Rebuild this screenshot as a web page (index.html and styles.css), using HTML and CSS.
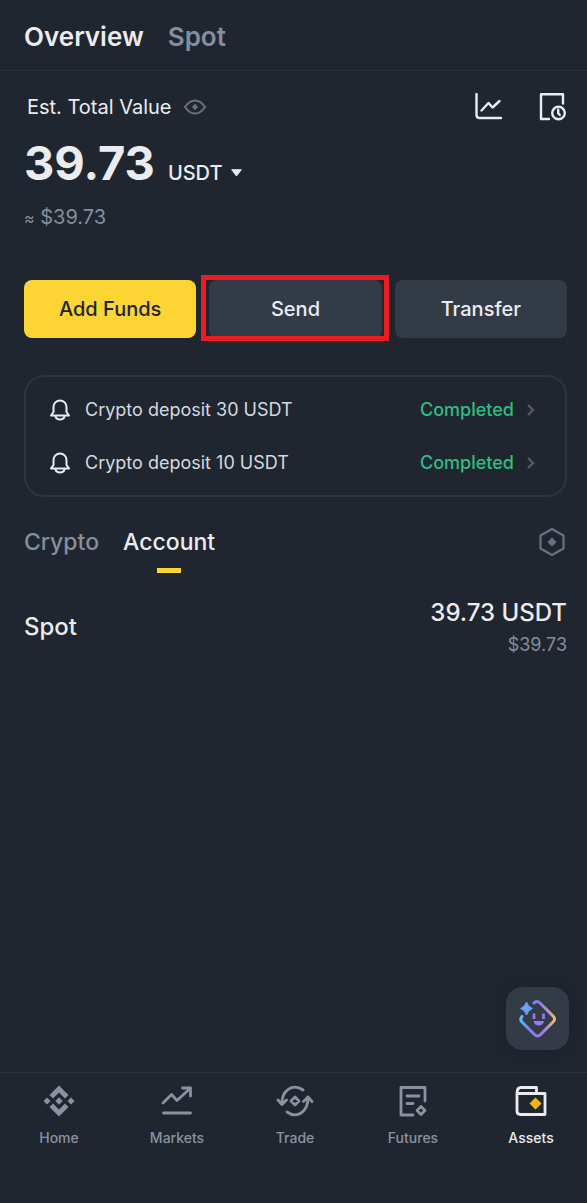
FILE: index.html
```html
<!DOCTYPE html>
<html lang="en">
<head>
<meta charset="utf-8">
<meta name="viewport" content="width=device-width, initial-scale=1">
<title>Assets</title>
<link rel="stylesheet" href="styles.css">
</head>
<body>
<div class="app">
  <header class="top-tabs">
    <button class="top-tab is-active" type="button">Overview</button>
    <button class="top-tab" type="button">Spot</button>
  </header>

  <main class="content">
    <section class="balance">
      <div class="balance-head">
        <h1 class="balance-label">Est. Total Value</h1>
        <button class="icon-button eye" type="button" aria-label="Hide balance">
          <svg width="22" height="16" viewBox="0 0 22 16" fill="none" stroke="currentColor" stroke-width="2" stroke-linejoin="round"><path d="M1 8C4 3.500 7.500 1.500 11 1.500S18 3.500 21 8C18 12.500 14.500 14.500 11 14.500S4 12.500 1 8Z"/><path d="M11 4.800 14.200 8 11 11.200 7.800 8Z" fill="currentColor" stroke="none"/></svg>
        </button>
        <div class="balance-tools">
          <button class="icon-button" type="button" aria-label="Profit and loss">
            <svg width="28" height="28" viewBox="0 0 28 28" fill="none" stroke="currentColor" stroke-width="2.400" stroke-linecap="round" stroke-linejoin="round"><path d="M1.500 1V22Q1.500 25 4.500 25H26"/><path d="M6.500 17.500 13.500 10 17.500 14.500 24.500 8"/></svg>
          </button>
          <button class="icon-button" type="button" aria-label="History">
            <svg width="28" height="28" viewBox="0 0 28 28" fill="none" stroke="currentColor" stroke-width="2.400" stroke-linecap="round" stroke-linejoin="round"><path d="M24 10.500V1.200H2V26H10"/><circle cx="19.500" cy="20" r="6.300"/><path d="M19.200 16.800V20.300L20.800 22"/></svg>
          </button>
        </div>
      </div>
      <div class="balance-main">
        <span class="balance-value">39.73</span>
        <button class="currency" type="button">USDT
          <svg width="11" height="8" viewBox="0 0 11 8" fill="currentColor" stroke="currentColor" stroke-width="1" stroke-linejoin="round"><path d="M.7.700H10.300L5.500 7Z"/></svg>
        </button>
      </div>
      <p class="balance-fiat"><span class="approx">≈</span> $39.73</p>
    </section>

    <div class="actions">
      <button class="action action-primary" type="button">Add Funds</button>
      <button class="action is-highlighted" type="button">Send</button>
      <button class="action" type="button">Transfer</button>
    </div>

    <div class="notices">
      <a class="notice" href="#">
        <svg class="bell" width="20" height="22" viewBox="0 0 20 22" fill="none" stroke="currentColor" stroke-width="2" stroke-linecap="round" stroke-linejoin="round"><path d="M3.500 13V8A6.500 6.500 0 0 1 16.500 8V13L19 16.500H1Z"/><path d="M5.500 17.500C6.500 21.500 13.500 21.500 14.500 17.500"/></svg>
        <span class="notice-text">Crypto deposit 30 USDT</span>
        <span class="notice-status">Completed</span>
        <svg class="chevron" width="8" height="12" viewBox="0 0 8 12" fill="none" stroke="currentColor" stroke-width="2.400"><path d="M1 1 6 6 1 11"/></svg>
      </a>
      <a class="notice" href="#">
        <svg class="bell" width="20" height="22" viewBox="0 0 20 22" fill="none" stroke="currentColor" stroke-width="2" stroke-linecap="round" stroke-linejoin="round"><path d="M3.500 13V8A6.500 6.500 0 0 1 16.500 8V13L19 16.500H1Z"/><path d="M5.500 17.500C6.500 21.500 13.500 21.500 14.500 17.500"/></svg>
        <span class="notice-text">Crypto deposit 10 USDT</span>
        <span class="notice-status">Completed</span>
        <svg class="chevron" width="8" height="12" viewBox="0 0 8 12" fill="none" stroke="currentColor" stroke-width="2.400"><path d="M1 1 6 6 1 11"/></svg>
      </a>
    </div>

    <div class="list-tabs">
      <button class="list-tab" type="button">Crypto</button>
      <button class="list-tab is-active" type="button">Account</button>
      <button class="icon-button list-settings" type="button" aria-label="Settings">
        <svg width="28" height="30" viewBox="0 0 28 30" fill="none" stroke="currentColor" stroke-width="2.200" stroke-linejoin="round"><path d="M13 2 24.500 8.500V21.500L13 28 1.500 21.500V8.500Z"/><path d="M13 10.500 17.500 15 13 19.500 8.500 15Z" fill="currentColor" stroke="none"/></svg>
      </button>
    </div>

    <section class="account">
      <h2 class="account-name">Spot</h2>
      <div class="account-amounts">
        <span class="account-amount">39.73 USDT</span>
        <span class="account-fiat">$39.73</span>
      </div>
    </section>

    <button class="assistant" type="button" aria-label="Assistant">
      <svg width="40" height="40" viewBox="0 0 40 40" fill="none">
        <defs><linearGradient id="glow" x1="2" y1="20" x2="38" y2="20" gradientUnits="userSpaceOnUse"><stop offset="0" stop-color="#62b8f5"/><stop offset=".25" stop-color="#7286f4"/><stop offset=".6" stop-color="#9b78ee"/><stop offset=".82" stop-color="#c795c5"/><stop offset="1" stop-color="#f3c65c"/></linearGradient></defs>
        <path d="M16 4Q19 1 22 4L35 17Q38 20 35 23L22.500 35.500Q19.500 38.500 16.500 35.500L4 23Q1.500 20.500 4 17.500" stroke="url(#glow)" stroke-width="3" stroke-linecap="round"/>
        <path d="M8.500 3Q9.700 7.800 14.500 9.500Q9.700 11.200 8.500 16Q7.300 11.200 2.500 9.500Q7.300 7.800 8.500 3Z" fill="#6da0fa" stroke="#6da0fa" stroke-linejoin="round"/>
        <path d="M16 14.500V20M25.500 14.500V20" stroke="#8f79ec" stroke-width="2.800"/>
        <path d="M15.500 22H26C25 28 16.500 28 15.500 22Z" fill="#9a7af0"/>
      </svg>
    </button>
  </main>

  <nav class="bottom-nav" aria-label="Main">
    <a class="nav-item" href="#">
      <svg width="32" height="32" viewBox="0 0 32 32" fill="currentColor"><path d="M16 .500 25.500 10 22 13.500 16 7.500 10 13.500 6.500 10ZM16 31.500 25.500 22 22 18.500 16 24.500 10 18.500 6.500 22ZM4 12.500 7.500 16 4 19.500 .500 16ZM28 12.500 31.500 16 28 19.500 24.500 16ZM16 12.300 19.700 16 16 19.700 12.300 16Z"/></svg>
      <span>Home</span>
    </a>
    <a class="nav-item" href="#">
      <svg width="32" height="32" viewBox="0 0 32 32" fill="none" stroke="currentColor" stroke-width="2.800" stroke-linecap="round" stroke-linejoin="round"><path d="M2 18 10.500 9.500 16 15.500 28.500 4"/><path d="M21.500 3H29.500V11"/><path d="M2.500 28H29.500"/></svg>
      <span>Markets</span>
    </a>
    <a class="nav-item" href="#">
      <svg width="38" height="32" viewBox="0 0 38 32" fill="none" stroke="currentColor" stroke-width="2.800" stroke-linecap="round" stroke-linejoin="round"><path d="M27 5C17-2 5.500 5 6 19M2 15 6 19.500 10.500 15"/><path d="M11 27C21 34 32.500 27 32 12M27.500 16.500 32 12 36 16.500"/><path d="M19 12 23 16 19 20 15 16Z"/></svg>
      <span>Trade</span>
    </a>
    <a class="nav-item" href="#">
      <svg width="30" height="32" viewBox="0 0 30 32" fill="none" stroke="currentColor" stroke-width="2.800" stroke-linecap="round" stroke-linejoin="round"><path d="M27 16V2.500H3V30H15"/><path d="M9 11H21M9 18.500H15"/><path d="M23 21.500 27 25.500 23 29.500 19 25.500Z"/></svg>
      <span>Futures</span>
    </a>
    <a class="nav-item is-active" href="#" aria-current="page">
      <svg width="32" height="32" viewBox="0 0 32 32" fill="none" stroke="currentColor" stroke-width="2.800" stroke-linejoin="round"><path d="M2 8.500V26Q2 29.500 5.500 29.500H30V8.500H2Q2 2.500 6 2.500H21.500V8.500"/><path d="M20.500 12.500 26.500 18.500 20.500 24.500 14.500 18.500Z" fill="#f0b90b" stroke="none"/></svg>
      <span>Assets</span>
    </a>
  </nav>
</div>
</body>
</html>
```
FILE: styles.css
```css
:root {
  --bg: #202630;
  --surface: #333b47;
  --line: #2b323d;
  --text: #eaecef;
  --muted: #848e9c;
  --yellow: #fcd535;
  --green: #2ebd85;
}

* {
  box-sizing: border-box;
}

body {
  margin: 0;
  background: var(--bg);
  color: var(--text);
  font-family: Inter, "Liberation Sans", sans-serif;
}

button {
  padding: 0;
  border: 0;
  background: none;
  color: inherit;
  font: inherit;
}

a {
  color: inherit;
  text-decoration: none;
}

h1,
h2,
p {
  margin: 0;
}

svg {
  display: block;
  flex: none;
}

.app {
  display: flex;
  flex-direction: column;
  min-height: 100vh;
}

.top-tabs {
  display: flex;
  gap: 24px;
  padding: 21px 24px 17px;
  border-bottom: 1px solid #272e38;
}

.top-tab {
  color: var(--muted);
  font-size: 26px;
  font-weight: 600;
  line-height: 32px;
}

.top-tab.is-active {
  color: var(--text);
}

.content {
  position: relative;
  flex: 1;
  padding: 22px 20px 96px 24px;
}

.balance-head {
  display: flex;
  align-items: center;
  gap: 12px;
  padding-left: 3px;
}

.balance-label {
  font-size: 20px;
  font-weight: 400;
  line-height: 28px;
}

.icon-button {
  display: flex;
}

.eye {
  color: #69717f;
}

.balance-tools {
  display: flex;
  gap: 36px;
  margin-left: auto;
}

.balance-main {
  display: flex;
  align-items: baseline;
  gap: 13px;
  margin-top: 14px;
}

.balance-value {
  font-size: 47px;
  font-weight: 700;
  line-height: 56px;
}

.currency {
  display: flex;
  align-items: center;
  gap: 8px;
  font-size: 20px;
  font-weight: 500;
  line-height: 24px;
}

.balance-fiat {
  margin-top: 14px;
  color: var(--muted);
  font-size: 20px;
  line-height: 24px;
}

.approx {
  font-size: 16px;
}

.actions {
  display: grid;
  grid-template-columns: repeat(3, 1fr);
  gap: 13px;
  margin-top: 50px;
}

.action {
  position: relative;
  height: 58px;
  border-radius: 8px;
  background: var(--surface);
  font-size: 20px;
  font-weight: 500;
}

.action-primary {
  background: var(--yellow);
  color: #202630;
}

.is-highlighted::after {
  content: "";
  position: absolute;
  inset: -5px -7px -3px -8px;
  border: 5px solid #ed1c24;
}

.notices {
  margin-top: 37px;
  padding: 6px 30px 6px 24px;
  border: 2px solid #2e3540;
  border-radius: 20px;
}

.notice {
  display: flex;
  align-items: center;
  height: 53px;
  font-size: 18px;
}

.notice-text {
  margin-left: 15px;
  color: #d5d9df;
}

.notice-status {
  margin-left: auto;
  color: var(--green);
  font-weight: 500;
}

.chevron {
  margin-left: 13px;
  color: #535b68;
}

.list-tabs {
  display: flex;
  align-items: flex-start;
  gap: 24px;
  margin-top: 30px;
}

.list-tab {
  padding-bottom: 16px;
  color: var(--muted);
  font-size: 23px;
  font-weight: 500;
  line-height: 30px;
}

.list-tab.is-active {
  position: relative;
  color: var(--text);
}

.list-tab.is-active::after {
  content: "";
  position: absolute;
  bottom: 0;
  left: calc(50% - 12px);
  width: 24px;
  height: 5px;
  background: var(--yellow);
}

.list-settings {
  margin-left: auto;
  color: #69717f;
}

.account {
  display: flex;
  align-items: center;
  justify-content: space-between;
  margin-top: 24px;
}

.account-name,
.account-amount {
  font-size: 24px;
  font-weight: 500;
  line-height: 32px;
}

.account-amounts {
  display: flex;
  flex-direction: column;
  align-items: flex-end;
  gap: 4px;
}

.account-fiat {
  color: var(--muted);
  font-size: 18px;
  line-height: 24px;
}

.assistant {
  position: absolute;
  right: 18px;
  bottom: 22px;
  display: grid;
  place-items: center;
  width: 63px;
  height: 63px;
  border-radius: 16px;
  background: var(--surface);
  box-shadow: 0 0 12px #1b2029;
}

.bottom-nav {
  display: grid;
  grid-template-columns: repeat(5, 1fr);
  gap: 6px;
  padding: 12px 0 55px 3px;
  border-top: 1px solid var(--line);
}

.nav-item {
  display: flex;
  flex-direction: column;
  align-items: center;
  gap: 11px;
  color: #8b929f;
  font-size: 14px;
  font-weight: 500;
  line-height: 20px;
}

.nav-item.is-active {
  color: var(--text);
}
```
